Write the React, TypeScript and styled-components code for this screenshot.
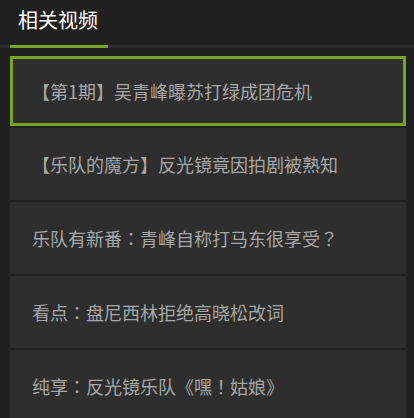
import React from 'react';
import styled, { createGlobalStyle } from 'styled-components';

const videos = [
  '【第1期】吴青峰曝苏打绿成团危机',
  '【乐队的魔方】反光镜竟因拍剧被熟知',
  '乐队有新番：青峰自称打马东很享受？',
  '看点：盘尼西林拒绝高晓松改词',
  '纯享：反光镜乐队《嘿！姑娘》',
];

const App = (): React.ReactElement => {
  return (
    <>
      <GlobalStyle />
      <Panel>
        <Header>
          <Tab>相关视频</Tab>
        </Header>
        <List>
          {videos.map((title, i) => (
            <Item key={title} active={i === 0}>
              {title}
            </Item>
          ))}
        </List>
      </Panel>
    </>
  );
};

const GlobalStyle = createGlobalStyle`
  html, body {
    margin: 0;
    padding: 0;
    background: #202020;
    overflow: hidden;
  }
  body {
    font-family: "Noto Sans CJK TC", "Noto Sans CJK SC", "Noto Sans", sans-serif;
  }
`;

const Panel = styled.div`
  width: 414px;
  height: 418px;
  background: #202020;
  overflow: hidden;
`;

const Header = styled.div`
  display: flex;
  height: 48px;
  padding-left: 10px;
  box-sizing: border-box;
  border-bottom: 3px solid #2a2a2a;
`;

const Tab = styled.div`
  width: 98px;
  padding-left: 8px;
  box-sizing: border-box;
  color: #ffffff;
  font-size: 20px;
  line-height: 40px;
  position: relative;

  &::after {
    content: '';
    position: absolute;
    left: 0;
    right: 0;
    bottom: -3px;
    height: 3px;
    background: #78a51c;
  }
`;

const List = styled.div`
  display: flex;
  flex-direction: column;
  gap: 2px;
  padding: 8px 8px 0 10px;
`;

const Item = styled.div<{ active?: boolean }>`
  display: flex;
  align-items: center;
  box-sizing: border-box;
  height: ${({ active }) => (active ? '70px' : '72px')};
  padding-left: ${({ active }) => (active ? '19px' : '22px')};
  background: #2e2e2e;
  border: ${({ active }) => (active ? '3px solid #78a51c' : 'none')};
  color: #a6a6a6;
  font-size: 18px;
  white-space: nowrap;
`;

export default App;
